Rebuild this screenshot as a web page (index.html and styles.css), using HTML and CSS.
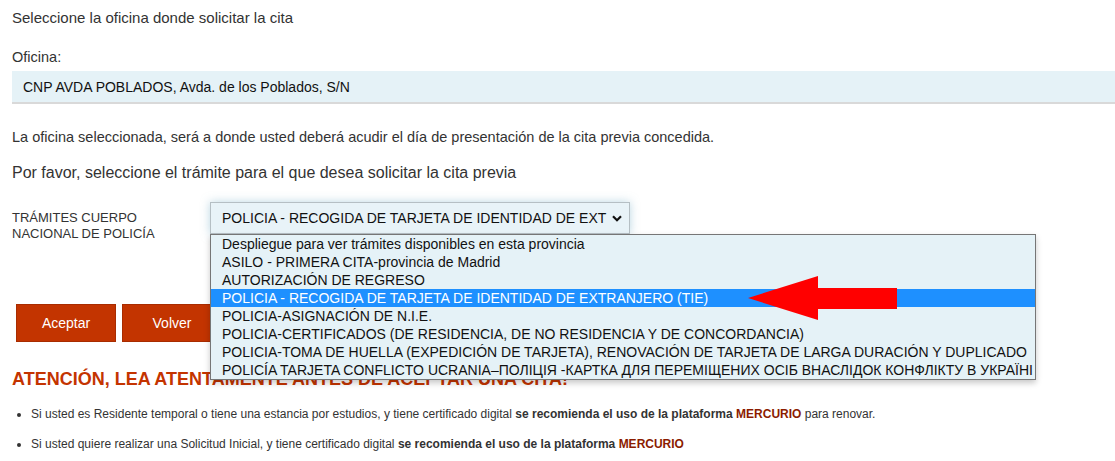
FILE: index.html
```html
<!DOCTYPE html>
<html lang="es">
<head>
  <meta charset="UTF-8">
  <title>Cita previa - Selección de trámite</title>
  <link rel="stylesheet" href="styles.css">
</head>
<body>
  <main class="page">
    <h2 class="titulo titulo-oficina">Seleccione la oficina donde solicitar la cita</h2>

    <label class="etiqueta">Oficina:</label>
    <div class="oficina">CNP AVDA POBLADOS, Avda. de los Poblados, S/N</div>

    <p class="nota">La oficina seleccionada, será a donde usted deberá acudir el día de presentación de la cita previa concedida.</p>

    <h3 class="titulo titulo-tramite">Por favor, seleccione el trámite para el que desea solicitar la cita previa</h3>

    <div class="fila-tramite">
      <label class="etiqueta-tramite">TRÁMITES CUERPO NACIONAL DE POLICÍA</label>
      <div class="combo">
        <div class="combo-valor">
          <span>POLICIA - RECOGIDA DE TARJETA DE IDENTIDAD DE EXT</span>
          <svg class="chevron" width="10" height="7" viewBox="0 0 10 7"><path d="M1 1.2 L5 5.2 L9 1.2" fill="none" stroke="#111" stroke-width="2.2"/></svg>
        </div>
        <ul class="combo-lista">
          <li>Despliegue para ver trámites disponibles en esta provincia</li>
          <li>ASILO - PRIMERA CITA-provincia de Madrid</li>
          <li>AUTORIZACIÓN DE REGRESO</li>
          <li class="activo">POLICIA - RECOGIDA DE TARJETA DE IDENTIDAD DE EXTRANJERO (TIE)</li>
          <li>POLICIA-ASIGNACIÓN DE N.I.E.</li>
          <li>POLICIA-CERTIFICADOS (DE RESIDENCIA, DE NO RESIDENCIA Y DE CONCORDANCIA)</li>
          <li>POLICIA-TOMA DE HUELLA (EXPEDICIÓN DE TARJETA), RENOVACIÓN DE TARJETA DE LARGA DURACIÓN Y DUPLICADO</li>
          <li>POLICÍA TARJETA CONFLICTO UCRANIA–ПОЛІЦІЯ -КАРТКА ДЛЯ ПЕРЕМІЩЕНИХ ОСІБ ВНАСЛІДОК КОНФЛІКТУ В УКРАЇНІ</li>
          <svg class="flecha" width="152" height="46" viewBox="0 0 152 46"><polygon points="2,23 72,1 72,13 151,13 151,34 72,34 72,45" fill="#ff0000"/></svg>
        </ul>
      </div>
    </div>

    <div class="botones">
      <button type="button" class="btn">Aceptar</button>
      <button type="button" class="btn">Volver</button>
    </div>

    <h4 class="aviso">ATENCIÓN, LEA ATENTAMENTE ANTES DE ACEPTAR UNA CITA!</h4>

    <ul class="lista-info">
      <li>Si usted es Residente temporal o tiene una estancia por estudios, y tiene certificado digital <strong>se recomienda el uso de la plataforma <span class="mercurio">MERCURIO</span></strong> para renovar.</li>
      <li>Si usted quiere realizar una Solicitud Inicial, y tiene certificado digital <strong>se recomienda el uso de la plataforma <span class="mercurio">MERCURIO</span></strong></li>
    </ul>
  </main>
</body>
</html>
```
FILE: styles.css
```css
body {
  margin: 0;
  font-family: "Liberation Sans", Arial, sans-serif;
  color: #333;
  background: #fff;
  overflow: hidden;
}
.page {
  padding-left: 12px;
}
.titulo {
  margin: 8px 0 0;
  font-size: 16px;
  line-height: 20px;
  font-weight: normal;
  color: #333;
}
.titulo-oficina {
  font-size: 15px;
}
.etiqueta {
  display: block;
  margin-top: 21px;
  font-size: 14.5px;
  line-height: 16px;
}
.oficina {
  margin-top: 6px;
  height: 31px;
  line-height: 32px;
  padding-left: 11px;
  background: #e5f2f7;
  border-bottom: 2px solid #d9d9d9;
  font-size: 14px;
  color: #111;
}
.nota {
  margin: 25px 0 0;
  font-size: 14.5px;
  line-height: 16px;
}
.titulo-tramite {
  margin-top: 18px;
}
.fila-tramite {
  display: flex;
  margin-top: 19px;
}
.etiqueta-tramite {
  width: 160px;
  margin-right: 38px;
  padding-top: 8px;
  font-size: 13px;
  line-height: 16px;
}
.combo {
  position: relative;
}
.combo-valor {
  display: flex;
  align-items: center;
  justify-content: space-between;
  box-sizing: border-box;
  width: 420px;
  height: 32px;
  padding: 0 7px 0 11px;
  background: #e8f3f8;
  border: 1px solid #b5bfc4;
  box-shadow: 0 0 10px rgba(120, 175, 200, 0.5);
  font-size: 14px;
  color: #111;
}
.chevron {
  margin-top: 1px;
}
.combo-lista {
  position: absolute;
  top: 32px;
  left: 0;
  width: 824px;
  margin: 0;
  padding: 0;
  list-style: none;
  background: #e5f2f7;
  border: 1px solid #767676;
  box-shadow: 0 3px 6px rgba(0, 0, 0, 0.22);
  z-index: 5;
}
.combo-lista li {
  height: 18px;
  line-height: 18px;
  padding-left: 11px;
  font-size: 14px;
  color: #111;
  white-space: nowrap;
}
.combo-lista li.activo {
  background: #1e90ff;
  color: #fff;
}
.flecha {
  position: absolute;
  left: 535px;
  top: 40px;
}
.botones {
  display: flex;
  gap: 6px;
  margin-top: 62px;
  padding-left: 4px;
}
.btn {
  width: 100px;
  height: 38px;
  background: #c33400;
  border: 1px solid #a82c00;
  color: #fff;
  font-family: inherit;
  font-size: 14px;
}
.aviso {
  margin: 26px 0 0;
  font-size: 18px;
  line-height: 22px;
  color: #c43400;
}
.lista-info {
  margin: 16px 0 0;
  padding-left: 19px;
  font-size: 12px;
  line-height: 16px;
}
.lista-info li {
  margin-bottom: 14px;
}
.mercurio {
  color: #8b1c00;
}
```
